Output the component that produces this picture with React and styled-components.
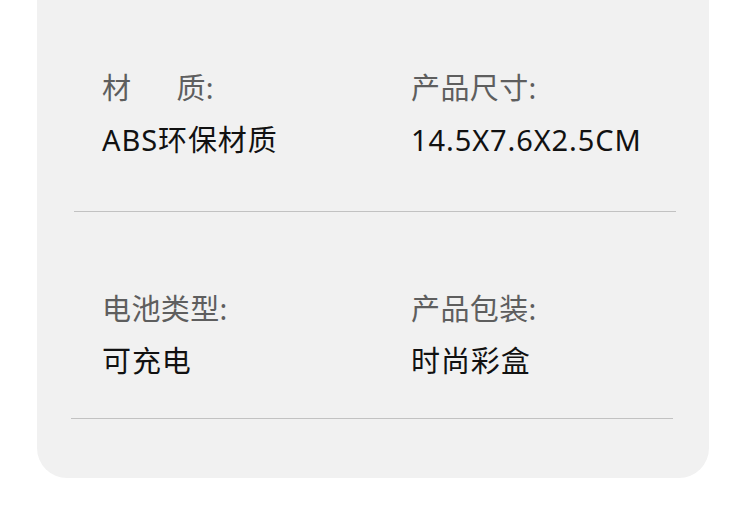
import React from "react";
import styled, { createGlobalStyle } from "styled-components";

const specs = [
  {
    items: [
      { label: ["材", "质:"], value: "ABS环保材质" },
      { label: ["产品尺寸:"], value: "14.5X7.6X2.5CM" },
    ],
    top: 69,
    bottom: 52,
    inset: [37, 33],
  },
  {
    items: [
      { label: ["电池类型:"], value: "可充电" },
      { label: ["产品包装:"], value: "时尚彩盒" },
    ],
    top: 78,
    bottom: 38,
    inset: [34, 36],
  },
];

const App = () => {
  return (
    <>
      <GlobalStyle />
      <Page>
        <Card>
          {specs.map((row, i) => (
            <React.Fragment key={i}>
              <Row $top={row.top} $bottom={row.bottom}>
                {row.items.map((item, j) => (
                  <Cell key={j}>
                    <Label>
                      {item.label.length > 1 ? (
                        <>
                          {item.label[0]}
                          <Gap />
                          {item.label[1]}
                        </>
                      ) : (
                        item.label[0]
                      )}
                    </Label>
                    <Value>{item.value}</Value>
                  </Cell>
                ))}
              </Row>
              <Divider $left={row.inset[0]} $right={row.inset[1]} />
            </React.Fragment>
          ))}
        </Card>
      </Page>
    </>
  );
};

export default App;

const GlobalStyle = createGlobalStyle`
  html, body {
    margin: 0;
    padding: 0;
    background: #ffffff;
  }
  body {
    font-family: "Noto Sans", "Noto Sans CJK SC", sans-serif;
  }
`;

const Page = styled.div`
  width: 750px;
  height: 527px;
  padding: 0 41px 0 37px;
  box-sizing: border-box;
`;

const Card = styled.div`
  background: #f1f1f1;
  border-radius: 0 0 30px 30px;
  padding-bottom: 59px;
`;

const Row = styled.div`
  display: grid;
  grid-template-columns: 309px 1fr;
  padding: ${(p) => p.$top}px 0 ${(p) => p.$bottom}px 65px;
`;

const Cell = styled.div`
  display: flex;
  flex-direction: column;
  gap: 14px;
`;

const Label = styled.div`
  font-size: 29px;
  line-height: 38px;
  letter-spacing: 0.4px;
  color: #5e5e5e;
  white-space: nowrap;
`;

const Gap = styled.span`
  display: inline-block;
  width: 45px;
`;

const Value = styled.div`
  font-size: 29px;
  line-height: 38px;
  letter-spacing: 0.9px;
  color: #111111;
  white-space: nowrap;
`;

const Divider = styled.div`
  height: 1px;
  background: #c2c2c2;
  margin: 0 ${(p) => p.$right}px 0 ${(p) => p.$left}px;
`;
